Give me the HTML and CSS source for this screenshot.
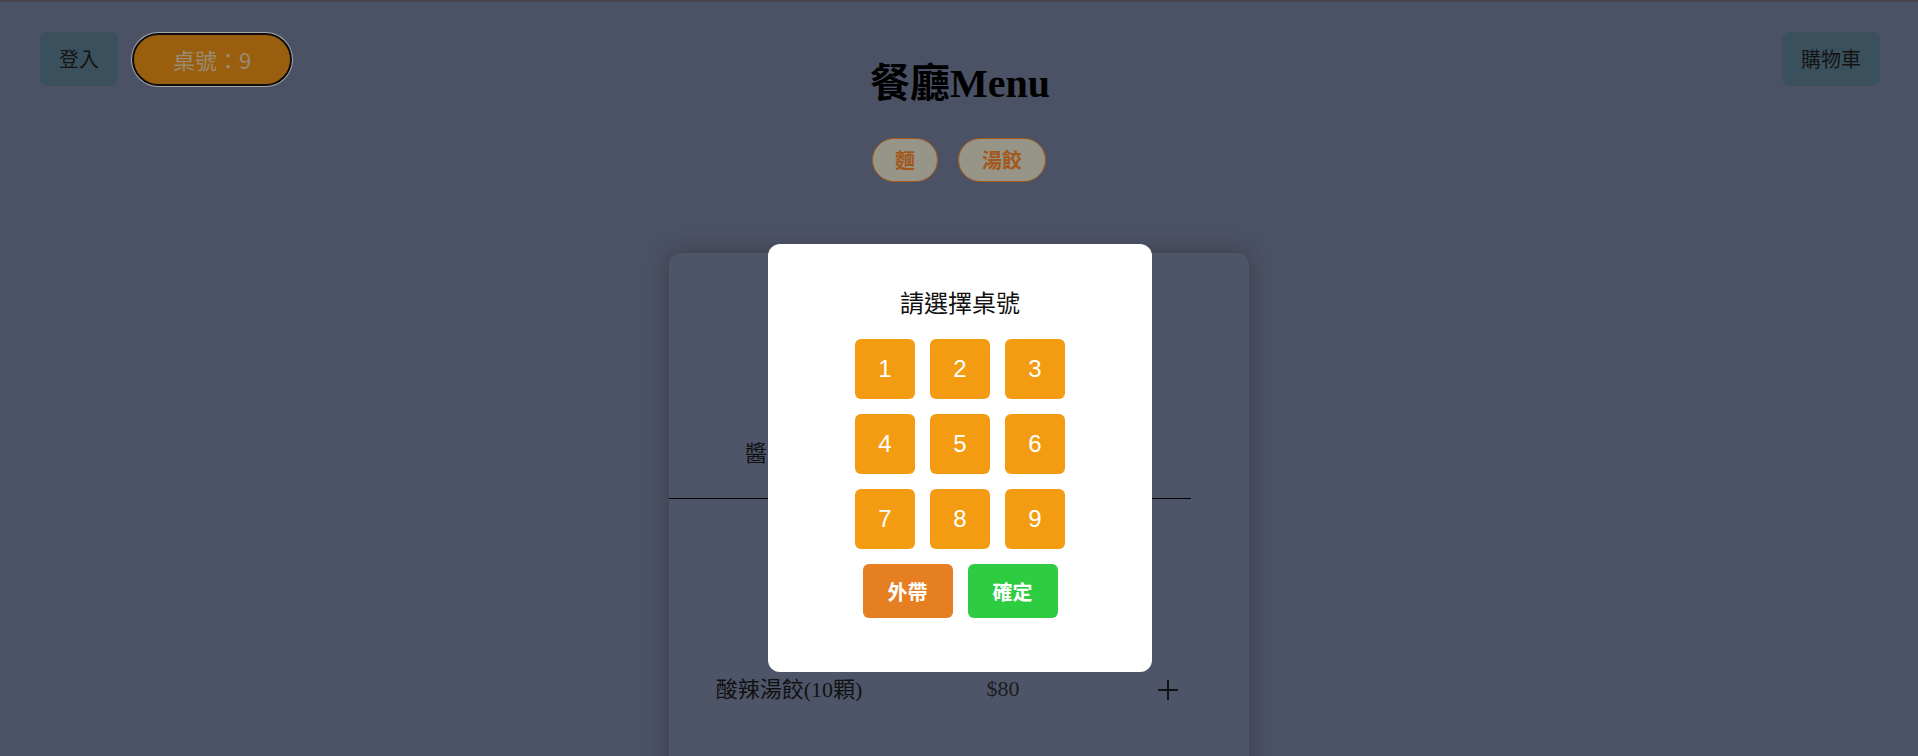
FILE: index.html
```html
<!DOCTYPE html>
<html lang="zh-Hant">
<head>
<meta charset="utf-8">
<title>餐廳Menu</title>
<link rel="stylesheet" href="styles.css">
</head>
<body>
<div class="topline"></div>
<header class="header">
  <div class="header-left">
    <button class="btn-dim">登入</button>
    <button class="table-pill">桌號：9</button>
  </div>
  <h1 class="title">餐廳Menu</h1>
  <div class="header-right">
    <button class="btn-dim">購物車</button>
  </div>
</header>

<nav class="cats">
  <button class="cat">麵</button>
  <button class="cat">湯餃</button>
</nav>

<main class="card">
  <div class="row row-first">
    <div class="cell name">醬燒湯餃</div>
    <div class="cell"></div>
    <div class="cell"></div>
  </div>
  <div class="row">
    <div class="cell name">酸辣湯餃(10顆)</div>
    <div class="cell price">$80</div>
    <div class="cell add">
      <svg width="24" height="24" viewBox="0 0 24 24"><path d="M12 2V22M2 12H22" stroke="#111" stroke-width="2" fill="none"/></svg>
    </div>
  </div>
</main>

<div class="overlay">
  <div class="modal">
    <h3 class="modal-title">請選擇桌號</h3>
    <div class="numpad">
      <button class="num">1</button>
      <button class="num">2</button>
      <button class="num">3</button>
      <button class="num">4</button>
      <button class="num">5</button>
      <button class="num">6</button>
      <button class="num">7</button>
      <button class="num">8</button>
      <button class="num">9</button>
    </div>
    <div class="actions">
      <button class="act takeout">外帶</button>
      <button class="act confirm">確定</button>
    </div>
  </div>
</div>
</body>
</html>
```

FILE: styles.css
```css
* { box-sizing: border-box; }

html, body {
  margin: 0;
  padding: 0;
}

body {
  background: #4c5265;
  min-height: 756px;
  overflow: hidden;
  font-family: "Noto Sans CJK TC", "Liberation Sans", sans-serif;
}

.topline {
  height: 2px;
  background: #47434f;
}

button {
  font-family: "Noto Sans CJK TC", "Liberation Sans", sans-serif;
  border: none;
  cursor: pointer;
}

.header {
  display: grid;
  grid-template-columns: 1fr auto 1fr;
  padding: 30px 38px 0 40px;
}

.header-left {
  display: flex;
  align-items: center;
  gap: 16px;
  align-self: start;
}

.header-right {
  display: flex;
  justify-content: flex-end;
  align-self: start;
}

.btn-dim {
  height: 54px;
  padding: 0 19px;
  background: #3a505c;
  color: #141414;
  font-size: 20px;
  border-radius: 8px;
  line-height: 54px;
}

.table-pill {
  width: 156px;
  height: 49px;
  border-radius: 25px;
  background: #9a5f0e;
  color: #9a8c74;
  font-size: 22px;
  line-height: 49px;
  padding: 0;
  box-shadow: 0 0 0 2px #0d0d0d, 0 0 0 3px #a6a7ad;
}

.title {
  margin: 28px 0 0;
  font-family: "Liberation Serif", "Noto Sans CJK TC", serif;
  font-weight: bold;
  font-size: 40px;
  line-height: 48px;
  color: #000;
}

.cats {
  display: flex;
  justify-content: center;
  gap: 20px;
  margin-top: 30px;
}

.cat {
  height: 44px;
  padding: 0 22px;
  border: 1px solid #a0581e;
  border-radius: 22px;
  background: #979588;
  color: #a3581b;
  font-size: 20px;
  font-weight: bold;
  line-height: 42px;
}

.cat:last-child { padding: 0 23px; }

.card {
  width: 580px;
  height: 640px;
  margin: 71px auto 0;
  padding-top: 10px;
  background: #4f5569;
  border-radius: 12px;
  box-shadow: 0 0 22px rgba(20, 22, 32, 0.35);
}

.row {
  width: 90%;
  display: grid;
  grid-template-columns: 240px 188px 1fr;
  align-items: center;
  padding: 176px 0 29px;
  font-family: "Liberation Serif", "Noto Sans CJK TC", serif;
  color: #111;
}

.row-first {
  border-bottom: 1px solid #000;
}

.cell {
  height: 30px;
  line-height: 30px;
  text-align: center;
}

.name { font-size: 22px; }

.price {
  font-size: 22px;
  color: #1c1c1c;
  margin-top: -3px;
}

.add {
  display: flex;
  justify-content: flex-end;
  align-items: center;
  padding-right: 11px;
}

.overlay {
  position: fixed;
  inset: 0;
  display: flex;
  justify-content: center;
  align-items: flex-start;
  padding: 244px 0 0 2px;
}

.modal {
  width: 384px;
  background: #fff;
  border-radius: 12px;
  padding: 42px 0 54px;
  display: flex;
  flex-direction: column;
  align-items: center;
}

.modal-title {
  margin: 0 0 21px;
  font-size: 24px;
  font-weight: normal;
  line-height: 32px;
  color: #111;
}

.numpad {
  display: grid;
  grid-template-columns: repeat(3, 60px);
  grid-auto-rows: 60px;
  gap: 15px;
}

.num {
  background: #f39c12;
  color: #fff;
  font-family: "Liberation Sans", sans-serif;
  font-size: 24px;
  border-radius: 6px;
  padding: 0;
}

.actions {
  display: flex;
  gap: 15px;
  margin-top: 15px;
}

.act {
  width: 90px;
  height: 54px;
  border-radius: 6px;
  color: #fff;
  font-size: 20px;
  font-weight: bold;
  padding: 0;
}

.takeout { background: #e67e22; }
.confirm { background: #2ecc40; }
```
